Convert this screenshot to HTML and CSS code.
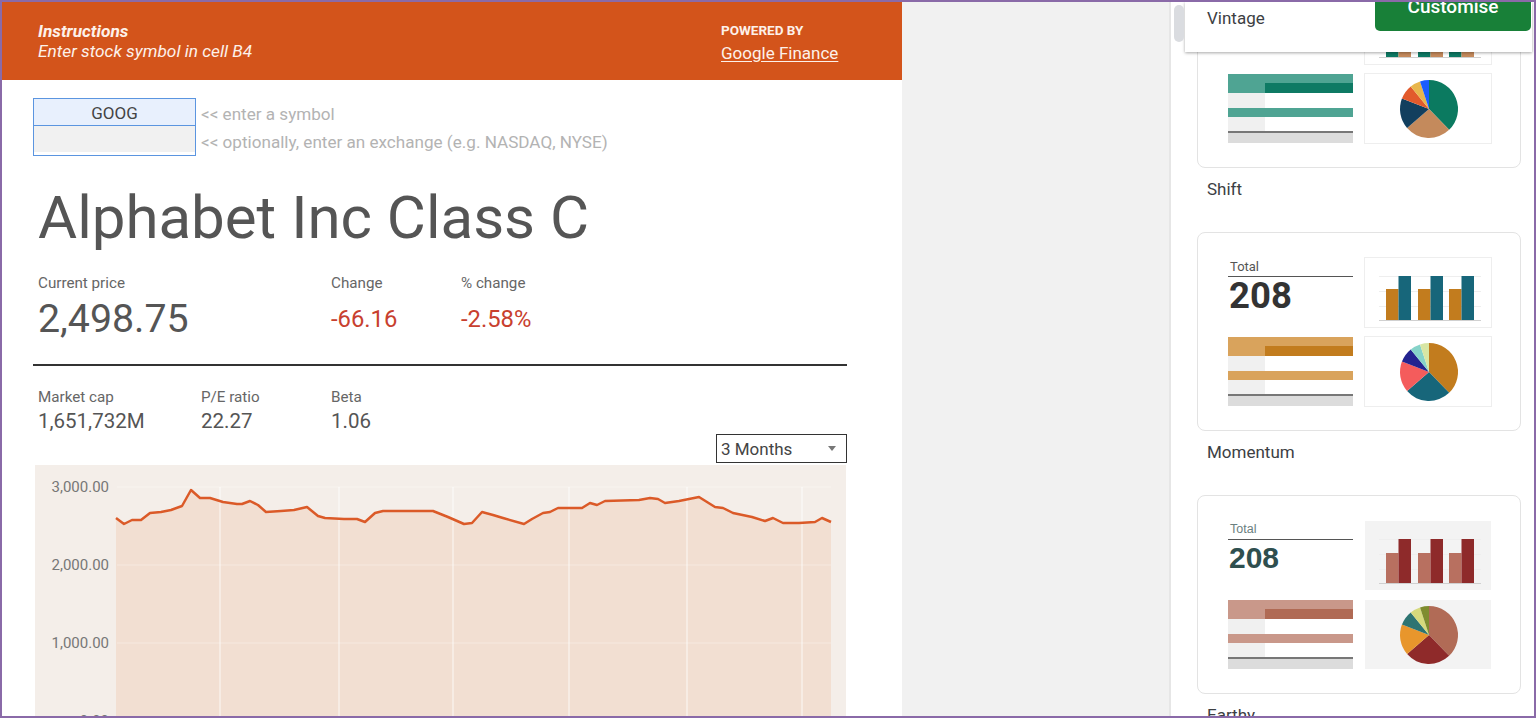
FILE: index.html
```html
<!DOCTYPE html>
<html lang="en">
<head>
<meta charset="utf-8">
<title>Stock tracker</title>
<link rel="stylesheet" href="styles.css">
</head>
<body>
<div class="frame">
  <section class="sheet">
    <header class="banner">
      <div class="instr">
        <div class="instr-title">Instructions</div>
        <div class="instr-text">Enter stock symbol in cell B4</div>
      </div>
      <div class="powered">
        <div class="pw-label">POWERED BY</div>
        <a class="pw-link">Google Finance</a>
      </div>
    </header>
    <div class="content">
      <div class="inputs">
        <div class="cells">
          <div class="cell cell-sym">GOOG</div>
          <div class="cell cell-ex"></div>
        </div>
        <div class="hints">
          <div class="hint">&lt;&lt; enter a symbol</div>
          <div class="hint">&lt;&lt; optionally, enter an exchange (e.g. NASDAQ, NYSE)</div>
        </div>
      </div>
      <h1 class="title">Alphabet Inc Class C</h1>
      <div class="price-row">
        <div class="metric">
          <div class="m-label">Current price</div>
          <div class="m-value price">2,498.75</div>
        </div>
        <div class="metric">
          <div class="m-label">Change</div>
          <div class="m-value neg">-66.16</div>
        </div>
        <div class="metric">
          <div class="m-label">% change</div>
          <div class="m-value neg">-2.58%</div>
        </div>
      </div>
      <div class="rule"></div>
      <div class="stats-row">
        <div class="stat">
          <div class="m-label">Market cap</div>
          <div class="s-value">1,651,732M</div>
        </div>
        <div class="stat">
          <div class="m-label">P/E ratio</div>
          <div class="s-value">22.27</div>
        </div>
        <div class="stat">
          <div class="m-label">Beta</div>
          <div class="s-value">1.06</div>
        </div>
      </div>
      <div class="range-row">
        <div class="select"><span>3 Months</span><span class="caret"></span></div>
      </div>
      <div class="chart">
        <svg class="chart-svg" width="811" height="260" viewBox="0 0 811 260">
          <path class="area" d="M81,53 L89,59 L97,55 L106,55 L115,48 L126,47 L136,45 L147,41 L156,25 L165,33 L175,33 L188,37 L202,39 L207,39 L215,36 L223,40 L231,47 L246,46 L259,45 L272,42 L283,51 L290,53 L309,54 L322,54 L330,57 L340,48 L348,46 L361,46 L382,46 L398,46 L413,52 L429,59 L437,58 L447,47 L458,50 L468,53 L489,59 L497,54 L508,48 L515,47 L523,43 L547,43 L555,38 L562,40 L570,36 L604,35 L615,33 L623,34 L630,38 L644,36 L664,32 L680,42 L688,43 L698,48 L717,52 L730,56 L738,53 L748,58 L764,58 L780,57 L787,53 L796,57 L796,260 L81,260 Z"/>
          <g class="hgrid">
            <line x1="82" y1="22" x2="796" y2="22"/>
            <line x1="82" y1="100" x2="796" y2="100"/>
            <line x1="82" y1="178" x2="796" y2="178"/>
          </g>
          <g class="vgrid">
            <line x1="185" y1="22" x2="185" y2="260"/>
            <line x1="304" y1="22" x2="304" y2="260"/>
            <line x1="418" y1="22" x2="418" y2="260"/>
            <line x1="534" y1="22" x2="534" y2="260"/>
            <line x1="652" y1="22" x2="652" y2="260"/>
            <line x1="767" y1="22" x2="767" y2="260"/>
          </g>
          <polyline class="line" points="81,53 89,59 97,55 106,55 115,48 126,47 136,45 147,41 156,25 165,33 175,33 188,37 202,39 207,39 215,36 223,40 231,47 246,46 259,45 272,42 283,51 290,53 309,54 322,54 330,57 340,48 348,46 361,46 382,46 398,46 413,52 429,59 437,58 447,47 458,50 468,53 489,59 497,54 508,48 515,47 523,43 547,43 555,38 562,40 570,36 604,35 615,33 623,34 630,38 644,36 664,32 680,42 688,43 698,48 717,52 730,56 738,53 748,58 764,58 780,57 787,53 796,57"/>
          <g class="ylabels">
            <text x="74" y="27">3,000.00</text>
            <text x="74" y="105">2,000.00</text>
            <text x="74" y="183">1,000.00</text>
            <text x="74" y="261">0.00</text>
          </g>
        </svg>
      </div>
    </div>
  </section>

  <div class="gutter"></div>

  <aside class="panel">
    <div class="theme-list">

      <div class="theme theme-shift">
        <div class="card">
          <div class="thumbs">
            <div class="thumb total-thumb">
              <div class="t-label">Total</div>
              <div class="t-num">208</div>
            </div>
            <div class="thumb framed">
              <svg width="126" height="69" viewBox="0 0 126 69">
                <g class="bgrid"><line x1="14" y1="18.5" x2="116" y2="18.5"/><line x1="14" y1="33.5" x2="116" y2="33.5"/><line x1="14" y1="48.5" x2="116" y2="48.5"/></g>
                <g class="ba"><rect x="21" y="18" width="12.5" height="44"/><rect x="53" y="18" width="12.5" height="44"/><rect x="84" y="18" width="12.5" height="44"/></g>
                <g class="bb"><rect x="33.5" y="31" width="12.5" height="31"/><rect x="65.5" y="31" width="12.5" height="31"/><rect x="96.5" y="31" width="12.5" height="31"/></g>
                <line class="base" x1="14" y1="62.5" x2="116" y2="62.5"/>
              </svg>
            </div>
            <div class="thumb table-thumb">
              <div class="tt full"></div>
              <div class="tt split"><span></span></div>
              <div class="tt plain"><span></span></div>
              <div class="tt full"></div>
              <div class="tt plain short"><span></span></div>
              <div class="tt-line"></div>
              <div class="tt-foot"></div>
            </div>
            <div class="thumb framed">
              <svg width="126" height="69" viewBox="0 0 126 69">
                <path class="p1" d="M64,35 L64,6 A29,29 0 0 1 84.15,55.86 Z"/>
                <path class="p2" d="M64,35 L84.15,55.86 A29,29 0 0 1 42.11,54.03 Z"/>
                <path class="p3" d="M64,35 L42.11,54.03 A29,29 0 0 1 36.93,24.61 Z"/>
                <path class="p4" d="M64,35 L36.93,24.61 A29,29 0 0 1 45.75,12.46 Z"/>
                <path class="p5" d="M64,35 L45.75,12.46 A29,29 0 0 1 55.04,7.42 Z"/>
                <path class="p6" d="M64,35 L55.04,7.42 A29,29 0 0 1 64,6 Z"/>
              </svg>
            </div>
          </div>
        </div>
        <div class="theme-name">Shift</div>
      </div>

      <div class="theme theme-momentum">
        <div class="card">
          <div class="thumbs">
            <div class="thumb total-thumb">
              <div class="t-label">Total</div>
              <div class="t-num">208</div>
            </div>
            <div class="thumb framed">
              <svg width="126" height="69" viewBox="0 0 126 69">
                <g class="bgrid"><line x1="14" y1="18.5" x2="116" y2="18.5"/><line x1="14" y1="33.5" x2="116" y2="33.5"/><line x1="14" y1="48.5" x2="116" y2="48.5"/></g>
                <g class="ba"><rect x="21" y="31" width="12.5" height="31"/><rect x="53" y="31" width="12.5" height="31"/><rect x="84" y="31" width="12.5" height="31"/></g>
                <g class="bb"><rect x="33.5" y="18" width="12.5" height="44"/><rect x="65.5" y="18" width="12.5" height="44"/><rect x="96.5" y="18" width="12.5" height="44"/></g>
                <line class="base" x1="14" y1="62.5" x2="116" y2="62.5"/>
              </svg>
            </div>
            <div class="thumb table-thumb">
              <div class="tt full"></div>
              <div class="tt split"><span></span></div>
              <div class="tt plain"><span></span></div>
              <div class="tt full"></div>
              <div class="tt plain short"><span></span></div>
              <div class="tt-line"></div>
              <div class="tt-foot"></div>
            </div>
            <div class="thumb framed">
              <svg width="126" height="69" viewBox="0 0 126 69">
                <path class="p1" d="M64,35 L64,6 A29,29 0 0 1 84.15,55.86 Z"/>
                <path class="p2" d="M64,35 L84.15,55.86 A29,29 0 0 1 42.11,54.03 Z"/>
                <path class="p3" d="M64,35 L42.11,54.03 A29,29 0 0 1 36.93,24.61 Z"/>
                <path class="p4" d="M64,35 L36.93,24.61 A29,29 0 0 1 45.75,12.46 Z"/>
                <path class="p5" d="M64,35 L45.75,12.46 A29,29 0 0 1 55.04,7.42 Z"/>
                <path class="p6" d="M64,35 L55.04,7.42 A29,29 0 0 1 64,6 Z"/>
              </svg>
            </div>
          </div>
        </div>
        <div class="theme-name">Momentum</div>
      </div>

      <div class="theme theme-earthy">
        <div class="card">
          <div class="thumbs">
            <div class="thumb total-thumb">
              <div class="t-label">Total</div>
              <div class="t-num">208</div>
            </div>
            <div class="thumb shaded">
              <svg width="126" height="69" viewBox="0 0 126 69">
                <g class="bgrid"><line x1="14" y1="18.5" x2="116" y2="18.5"/><line x1="14" y1="33.5" x2="116" y2="33.5"/><line x1="14" y1="48.5" x2="116" y2="48.5"/></g>
                <g class="ba"><rect x="21" y="32" width="12.5" height="30"/><rect x="53" y="32" width="12.5" height="30"/><rect x="84" y="32" width="12.5" height="30"/></g>
                <g class="bb"><rect x="33.5" y="18" width="12.5" height="44"/><rect x="65.5" y="18" width="12.5" height="44"/><rect x="96.5" y="18" width="12.5" height="44"/></g>
                <line class="base" x1="14" y1="62.5" x2="116" y2="62.5"/>
              </svg>
            </div>
            <div class="thumb table-thumb">
              <div class="tt full"></div>
              <div class="tt split"><span></span></div>
              <div class="tt plain"><span></span></div>
              <div class="tt full"></div>
              <div class="tt plain short"><span></span></div>
              <div class="tt-line"></div>
              <div class="tt-foot"></div>
            </div>
            <div class="thumb shaded">
              <svg width="126" height="69" viewBox="0 0 126 69">
                <path class="p1" d="M64,35 L64,6 A29,29 0 0 1 84.15,55.86 Z"/>
                <path class="p2" d="M64,35 L84.15,55.86 A29,29 0 0 1 42.11,54.03 Z"/>
                <path class="p3" d="M64,35 L42.11,54.03 A29,29 0 0 1 36.93,24.61 Z"/>
                <path class="p4" d="M64,35 L36.93,24.61 A29,29 0 0 1 45.75,12.46 Z"/>
                <path class="p5" d="M64,35 L45.75,12.46 A29,29 0 0 1 55.04,7.42 Z"/>
                <path class="p6" d="M64,35 L55.04,7.42 A29,29 0 0 1 64,6 Z"/>
              </svg>
            </div>
          </div>
        </div>
        <div class="theme-name">Earthy</div>
      </div>

    </div>
    <div class="scroll-thumb"></div>
    <div class="panel-head"><span class="current-theme">Vintage</span></div>
    <div class="customise">Customise</div>
  </aside>
</div>
</body>
</html>
```

FILE: styles.css
```css
* { box-sizing: border-box; }

html, body {
  margin: 0;
  padding: 0;
  background: #ffffff;
}

body {
  font-family: Roboto, "Noto Sans", Arial, sans-serif;
  color: #555;
}

.frame {
  width: 1536px;
  height: 718px;
  border: 2px solid #8a6aa8;
  display: flex;
  overflow: hidden;
  background: #fff;
}

/* ---------- sheet ---------- */
.sheet {
  width: 900px;
  flex: none;
  background: #fff;
  overflow: hidden;
  display: flex;
  flex-direction: column;
}

.banner {
  height: 78px;
  flex: none;
  background: #d3541b;
  color: #fdf1ea;
  display: flex;
  justify-content: space-between;
  padding-left: 36px;
}

.instr {
  padding-top: 19px;
  font-style: italic;
  font-size: 17.3px;
  line-height: 20px;
}

.instr-title { font-weight: 700; }

.powered {
  width: 181px;
  padding-top: 20px;
}

.pw-label {
  font-weight: 700;
  font-size: 13.5px;
  line-height: 16px;
}

.pw-link {
  display: block;
  margin-top: 5px;
  font-size: 17px;
  line-height: 20px;
  text-decoration: underline;
  text-underline-offset: 2px;
}

.content {
  margin-left: 31px;
  width: 814px;
  display: flex;
  flex-direction: column;
}

.inputs {
  margin-top: 18px;
  display: flex;
}

.cells {
  width: 163px;
  border: 1px solid #5b95e0;
}

.cell {
  height: 27px;
  padding-top: 2px;
  font-size: 17px;
  line-height: 25px;
  text-align: center;
  color: #444;
}

.cell-sym {
  background: #e8f0fd;
  border-bottom: 1px solid #5b95e0;
}

.cell-ex {
  height: 26px;
  background: #f1f1f1;
}

.hints {
  margin-left: 5px;
  padding-top: 2px;
}

.hint {
  font-size: 17.1px;
  line-height: 28px;
  color: #b3b3b3;
}

.title {
  margin: 27px 0 0 5px;
  font-size: 60px;
  line-height: 70px;
  font-weight: 400;
  color: #555;
}

.price-row {
  margin-top: 21px;
  padding-left: 5px;
  display: grid;
  grid-template-columns: 293px 130px 1fr;
}

.m-label {
  font-size: 15.2px;
  line-height: 18px;
  color: #666;
}

.m-value {
  margin-top: 6px;
  line-height: 42px;
  font-size: 23.8px;
}

.m-value.price {
  font-size: 39.3px;
  color: #555;
}

.m-value.neg { color: #c8402e; }

.rule {
  margin-top: 24px;
  height: 2px;
  background: #333;
}

.stats-row {
  margin-top: 22px;
  padding-left: 5px;
  display: grid;
  grid-template-columns: 163px 130px 1fr;
}

.s-value {
  margin-top: 3px;
  font-size: 20.5px;
  line-height: 24px;
  color: #555;
}

.range-row {
  margin-top: 1px;
  display: flex;
  justify-content: flex-end;
}

.select {
  width: 131px;
  height: 29px;
  border: 1px solid #333;
  display: flex;
  align-items: center;
  justify-content: space-between;
  padding: 0 10px 0 4px;
  font-size: 17px;
  color: #444;
}

.caret {
  width: 0;
  height: 0;
  border-left: 4px solid transparent;
  border-right: 4px solid transparent;
  border-top: 5px solid #777;
}

.chart {
  margin: 2px 0 0 2px;
  width: 811px;
  height: 260px;
  background: #f4eee9;
}

.chart-svg { display: block; }

.area { fill: #f2dfd2; }

.hgrid line {
  stroke: rgba(255, 255, 255, 0.35);
  stroke-width: 1;
}

.vgrid line {
  stroke: rgba(255, 255, 255, 0.55);
  stroke-width: 1.5;
}

.line {
  fill: none;
  stroke: #db5a28;
  stroke-width: 2.5;
  stroke-linejoin: round;
}

.ylabels text {
  font-family: Roboto, "Noto Sans", Arial, sans-serif;
  font-size: 15px;
  fill: #777;
  text-anchor: end;
}

/* ---------- gutter ---------- */
.gutter {
  width: 267px;
  flex: none;
  background: #f1f1f1;
}

/* ---------- panel ---------- */
.panel {
  flex: 1;
  position: relative;
  border-left: 2px solid #e6e6e6;
  background: #fff;
  overflow: hidden;
}

.theme-list {
  margin-top: -33px;
  padding-left: 26px;
  display: flex;
  flex-direction: column;
}

.card {
  width: 324px;
  height: 199px;
  border: 1px solid #e3e3e3;
  border-radius: 8px;
  padding: 25px 0 0 30px;
}

.thumbs {
  display: grid;
  grid-template-columns: 125px 126px;
  grid-template-rows: 69px 69px;
  column-gap: 12px;
  row-gap: 10px;
}

.thumb { position: relative; }

.thumb svg { display: block; }

.framed {
  background: #fff;
  box-shadow: 0 0 0 1px #eeeeee;
}

.shaded { background: #f3f3f3; }

.theme-name {
  height: 64px;
  padding: 11px 0 0 10px;
  font-size: 17px;
  line-height: 20px;
  color: #3c4043;
}

/* total thumbnail */
.total-thumb { padding-top: 1px; }

.t-label {
  font-size: 13px;
  line-height: 15px;
  color: #555;
  padding-left: 2px;
  padding-bottom: 2px;
  border-bottom: 1.5px solid #555;
}

.t-num {
  margin-top: 1px;
  font-size: 36.5px;
  line-height: 36px;
  font-weight: 700;
  color: #333;
  padding-left: 1px;
}

.theme-earthy .total-thumb { padding-top: 1px; }

.theme-earthy .t-label {
  font-family: "Liberation Sans", Arial, sans-serif;
  font-size: 12.5px;
  color: #6b8080;
}

.theme-earthy .t-num {
  margin-top: 3px;
  font-family: "Liberation Sans", Arial, sans-serif;
  font-size: 30px;
  line-height: 30px;
  color: #2f4f4f;
}

/* table thumbnail */
.table-thumb {
  display: flex;
  flex-direction: column;
}

.tt { display: flex; }

.tt span { width: 37px; }

.tt.full { height: 9px; background: var(--light); }

.tt.split { height: 10px; background: var(--dark); }
.tt.split span { background: var(--light); }

.tt.plain { height: 15px; background: #fff; }
.tt.plain.short { height: 14px; }
.tt.plain span { background: #f0f0f0; }

.tt-line { height: 2px; background: #777; }

.tt-foot { height: 10px; background: #dcdcdc; }

/* bars */
.bgrid line { stroke: #eeeeee; stroke-width: 1; }
.base { stroke: #d0d0d0; stroke-width: 1; }

/* theme colours */
.theme-shift { --light: #4fa493; --dark: #0e7a64; }
.theme-shift .ba { fill: #0e7a64; }
.theme-shift .bb { fill: #c58a5c; }
.theme-shift .p1 { fill: #0b7a60; }
.theme-shift .p2 { fill: #c48a5c; }
.theme-shift .p3 { fill: #123f5e; }
.theme-shift .p4 { fill: #e25a2c; }
.theme-shift .p5 { fill: #e8b64c; }
.theme-shift .p6 { fill: #1a5cff; }

.theme-momentum { --light: #d9a35c; --dark: #c27c1e; }
.theme-momentum .ba { fill: #c27c1e; }
.theme-momentum .bb { fill: #17667a; }
.theme-momentum .p1 { fill: #c27c1e; }
.theme-momentum .p2 { fill: #17667a; }
.theme-momentum .p3 { fill: #f45c5c; }
.theme-momentum .p4 { fill: #23238f; }
.theme-momentum .p5 { fill: #86d3c9; }
.theme-momentum .p6 { fill: #d8e6a4; }

.theme-earthy { --light: #c9988a; --dark: #b06a54; }
.theme-earthy .ba { fill: #b87060; }
.theme-earthy .bb { fill: #8e2a2a; }
.theme-earthy .p1 { fill: #b16b56; }
.theme-earthy .p2 { fill: #8f2a2a; }
.theme-earthy .p3 { fill: #e8962c; }
.theme-earthy .p4 { fill: #2d7472; }
.theme-earthy .p5 { fill: #d5d97c; }
.theme-earthy .p6 { fill: #7f8c2f; }

/* overlay header */
.scroll-thumb {
  position: absolute;
  left: 3px;
  top: 3px;
  width: 10px;
  height: 37px;
  border-radius: 5px;
  background: #dadce0;
  z-index: 3;
}

.panel-head {
  position: absolute;
  top: 0;
  left: 14px;
  right: 2px;
  height: 50px;
  background: #fff;
  box-shadow: 0 1px 3px rgba(0, 0, 0, 0.35);
  padding: 6px 0 0 22px;
  z-index: 2;
}

.current-theme {
  font-size: 17px;
  line-height: 20px;
  color: #3c4043;
}

.customise {
  position: absolute;
  top: -7px;
  right: 3px;
  width: 156px;
  height: 36px;
  border-radius: 5px;
  background: #188038;
  color: #fff;
  font-size: 19px;
  font-weight: 500;
  line-height: 22px;
  text-align: center;
  padding-top: 1px;
  z-index: 4;
}
```
